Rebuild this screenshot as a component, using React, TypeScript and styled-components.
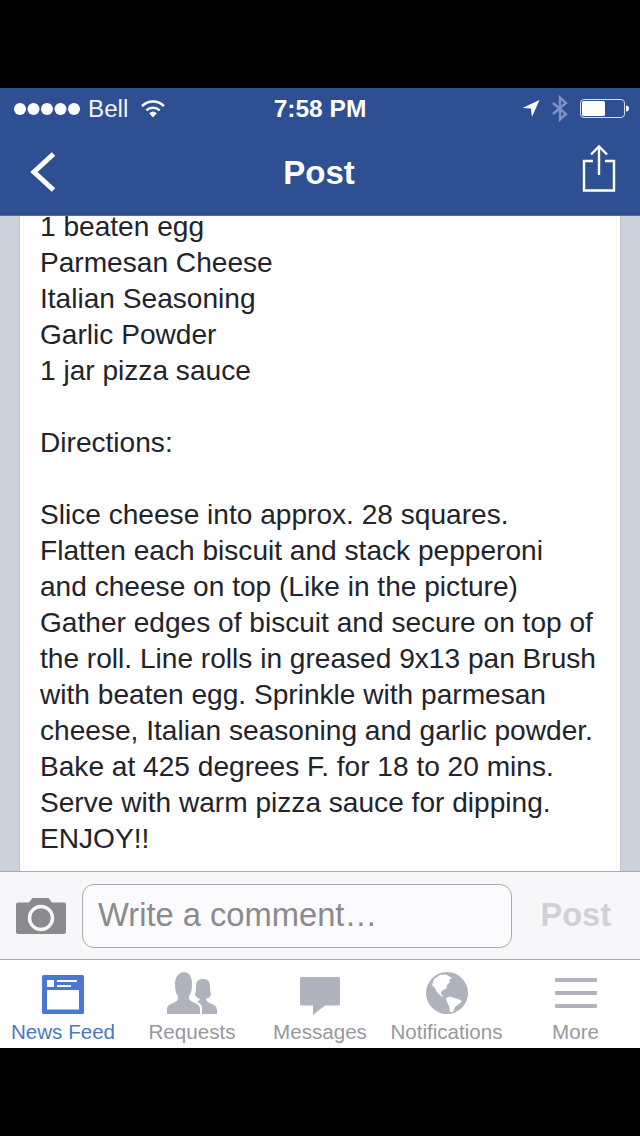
import styled, { createGlobalStyle } from 'styled-components';

const GlobalStyle = createGlobalStyle`
  html, body {
    margin: 0;
    padding: 0;
    background: #000;
    font-family: "Liberation Sans", Arial, sans-serif;
  }
`;

const Screen = styled.div`
  width: 640px;
  height: 1136px;
  padding: 88px 0;
  box-sizing: border-box;
  display: flex;
  flex-direction: column;
  background: #000;
`;

const Header = styled.header`
  height: 128px;
  flex: none;
  box-sizing: border-box;
  background: #2f4f93;
  border-bottom: 1px solid #5c6a88;
  color: #fff;
`;

const StatusBar = styled.div`
  height: 40px;
  padding: 1px 11px 0 11px;
  box-sizing: border-box;
  display: grid;
  grid-template-columns: 1fr auto 1fr;
  align-items: center;
  font-size: 24px;
`;

const StatusLeft = styled.div`
  display: flex;
  align-items: center;
  padding-left: 2px;
`;

const Carrier = styled.span`
  margin-left: 8px;
  margin-right: 12px;
  font-size: 24.200px;
  color: #f2f4f9;
`;

const Clock = styled.span`
  font-weight: 700;
  font-size: 24.500px;
`;

const StatusRight = styled.div`
  display: flex;
  align-items: center;
  justify-content: flex-end;
  gap: 12px;
`;

const NavBar = styled.div`
  height: 87px;
  padding: 0 24px 0 30px;
  display: flex;
  align-items: center;
  justify-content: space-between;
`;

const NavTitle = styled.h1`
  margin: 2px 0 0;
  font-size: 33px;
  font-weight: 700;
  color: #fff;
`;

const ShareButton = styled.div`
  display: flex;
  margin-bottom: 8px;
`;

const Content = styled.main`
  flex: 1;
  min-height: 0;
  overflow: hidden;
  background: #cdd1dc;
  padding: 0 19px;
`;

const Card = styled.article`
  height: 100%;
  box-sizing: border-box;
  background: #fff;
  border-left: 1px solid #c2c5cd;
  border-right: 1px solid #c2c5cd;
  padding-left: 20px;
  overflow: hidden;
`;

const PostText = styled.div`
  margin-top: -7px;
  font-size: 28.100px;
  line-height: 36px;
  color: #22232b;
  white-space: pre;
`;

const Composer = styled.div`
  height: 89px;
  flex: none;
  box-sizing: border-box;
  background: #f7f6f9;
  border-top: 1px solid #a9a9ae;
  border-bottom: 1px solid #a9a9ae;
  padding: 12px 29px 11px 16px;
  display: flex;
  align-items: center;
`;

const CommentBox = styled.div`
  width: 430px;
  height: 64px;
  margin-left: 16px;
  box-sizing: border-box;
  padding: 0 0 2px 15px;
  display: flex;
  align-items: center;
  background: #fbfafc;
  border: 1px solid #a9a8ad;
  border-radius: 12px;
  font-size: 32.700px;
  color: #8b8a8e;
`;

const PostButton = styled.span`
  margin: 0 0 2px auto;
  font-size: 32.500px;
  font-weight: 700;
  color: #d1d0d5;
`;

const TabBar = styled.nav`
  height: 88px;
  flex: none;
  background: #fff;
  display: grid;
  grid-template-columns: 126px 132px 124px 129px 129px;
`;

const Tab = styled.div<{ $active?: boolean }>`
  display: flex;
  flex-direction: column;
  align-items: center;
  padding-top: 10px;
  box-sizing: border-box;
  font-size: 20.600px;
  color: ${({ $active }) => ($active ? '#4a77c4' : '#97989f')};
`;

const TabIcon = styled.div`
  height: 44px;
  display: flex;
  align-items: flex-end;
  justify-content: center;
  margin-bottom: 6px;
`;

const TabLabel = styled.span`
  line-height: 24px;
  white-space: nowrap;
`;

const ICON_GREY = '#b0b3bd';

const Dots = () => (
  <svg width="67" height="14" viewBox="0 0 67 14">
    {[7, 20.5, 34, 47.5, 61].map((cx) => (
      <circle key={cx} cx={cx} cy="7" r="6" fill="#fff" />
    ))}
  </svg>
);

const Wifi = () => (
  <svg width="26" height="19" viewBox="0 0 26 20" fill="none" stroke="#fff" strokeWidth="2.6">
    <path d="M1.500 7.500a16 16 0 0 1 23 0" />
    <path d="M6 12a10 10 0 0 1 14 0" />
    <path d="M13 19.500l-4-4.500a6 6 0 0 1 8 0z" fill="#fff" stroke="none" />
  </svg>
);

const LocationArrow = () => (
  <svg width="18" height="19" viewBox="0 0 20 20">
    <path d="M19.500 0.500L0.500 9.500L10 10L11 19.500z" fill="#fff" />
  </svg>
);

const Bluetooth = () => (
  <svg width="16" height="27" viewBox="0 0 16 24" fill="none" stroke="#7e93c3" strokeWidth="2.400">
    <path d="M1 6.500L14 17.500L8 23V1L14 6.500L1 17.500" />
  </svg>
);

const Battery = () => (
  <svg width="49" height="20" viewBox="0 0 49 20">
    <rect x="0.500" y="0.500" width="44" height="18" rx="3.500" fill="none" stroke="#d6dcea" />
    <rect x="2" y="2" width="23" height="15" rx="1.500" fill="#fff" />
    <path d="M46 6.500c2 0 3 1.200 3 3s-1 3-3 3z" fill="#fff" />
  </svg>
);

const BackChevron = () => (
  <svg width="26" height="40" viewBox="0 0 26 40" fill="none" stroke="#fff" strokeWidth="5">
    <path d="M23.500 2L4 20L23.500 38" />
  </svg>
);

const ShareIcon = () => (
  <svg width="34" height="48" viewBox="0 0 34 48" fill="none" stroke="#fff" strokeWidth="2.400">
    <path d="M11 17H2V46.500H32V17H23" />
    <path d="M17 31V3" />
    <path d="M9 10.500L17 2.500L25 10.500" />
  </svg>
);

const CameraIcon = () => (
  <svg width="50" height="36" viewBox="0 0 50 36">
    <path
      d="M2 4.500h11l3.500-4.500h16l3.500 4.500h12a2 2 0 0 1 2 2V34a2 2 0 0 1-2 2H2a2 2 0 0 1-2-2V6.500a2 2 0 0 1 2-2z"
      fill="#8b8a8f"
    />
    <circle cx="25" cy="20" r="11.500" fill="none" stroke="#f7f6f9" strokeWidth="3.500" />
  </svg>
);

const NewsFeedIcon = () => (
  <svg width="42" height="39" viewBox="0 0 42 39">
    <rect width="42" height="39" rx="1.500" fill="#4a77d4" />
    <rect x="5" y="15" width="32" height="19.500" fill="#fff" />
    <rect x="5" y="5" width="7" height="7" fill="#fff" />
    <rect x="15" y="5" width="20" height="2" fill="#fff" />
    <rect x="15" y="10" width="14" height="2" fill="#fff" />
  </svg>
);

const RequestsIcon = () => (
  <svg width="50" height="42" viewBox="0 0 50 42">
    <path
      d="M0 42V37C0 34 2 33 4 32L10 29C11 28 11 26 11 24C9 22 8 18 8 12C8 5 11 1 17 0C23 1 25 5 25 12C25 18 24 22 22 24C22 26 22 28 24 29L30 32C32 33 33 35 33 37V42Z"
      fill={ICON_GREY}
    />
    <path
      d="M35 42V36C35 33 33 31 30 30C31 29 32 29 33 27C30 26 28 24 28 22C29 20 29 17 29 14C29 10 31 7 36 7C41 7 43 10 43 14C43 17 43 20 44 22C44 24 42 26 39 27C40 30 42 31 45 32C48 33 50 35 50 38V42Z"
      fill={ICON_GREY}
    />
  </svg>
);

const MessagesIcon = () => (
  <svg width="40" height="37" viewBox="0 0 40 37" overflow="visible">
    <path
      d="M1.500 0H38.500A1.500 1.500 0 0 1 40 1.500V27A1.500 1.500 0 0 1 38.500 28.500H25L13 38V28.500H1.500A1.500 1.500 0 0 1 0 27V1.500A1.500 1.500 0 0 1 1.500 0Z"
      fill={ICON_GREY}
    />
  </svg>
);

const GlobeIcon = () => (
  <svg width="42" height="42" viewBox="0 0 42 42">
    <circle cx="21" cy="21" r="21" fill={ICON_GREY} />
    <path
      d="M8 7L14 3L20 2.500L26 6L23 8L24 10L21 13L20 17L17 18L15 20L15 22L18 25L15 24L11 20L9 16L6 13Z"
      fill="#fff"
    />
    <path d="M20 26L24 24.500L28 26L32 27L36 29L33 32L29 35L27 40L24 40L23 34L21 30Z" fill="#fff" />
  </svg>
);

const MoreIcon = () => (
  <svg width="42" height="36" viewBox="0 0 42 36">
    <rect width="42" height="4" rx="1" fill={ICON_GREY} />
    <rect y="13" width="42" height="4" rx="1" fill={ICON_GREY} />
    <rect y="26" width="42" height="4" rx="1" fill={ICON_GREY} />
  </svg>
);

const postText = `1 beaten egg
Parmesan Cheese
Italian Seasoning
Garlic Powder
1 jar pizza sauce

Directions:

Slice cheese into approx. 28 squares.
Flatten each biscuit and stack pepperoni
and cheese on top (Like in the picture)
Gather edges of biscuit and secure on top of
the roll. Line rolls in greased 9x13 pan Brush
with beaten egg. Sprinkle with parmesan
cheese, Italian seasoning and garlic powder.
Bake at 425 degrees F. for 18 to 20 mins.
Serve with warm pizza sauce for dipping.
ENJOY!!`;

const tabs = [
  { label: 'News Feed', icon: <NewsFeedIcon />, active: true },
  { label: 'Requests', icon: <RequestsIcon /> },
  { label: 'Messages', icon: <MessagesIcon /> },
  { label: 'Notifications', icon: <GlobeIcon /> },
  { label: 'More', icon: <MoreIcon /> },
];

const App = () => (
  <>
    <GlobalStyle />
    <Screen>
      <Header>
        <StatusBar>
          <StatusLeft>
            <Dots />
            <Carrier>Bell</Carrier>
            <Wifi />
          </StatusLeft>
          <Clock>7:58 PM</Clock>
          <StatusRight>
            <LocationArrow />
            <Bluetooth />
            <Battery />
          </StatusRight>
        </StatusBar>
        <NavBar>
          <BackChevron />
          <NavTitle>Post</NavTitle>
          <ShareButton>
            <ShareIcon />
          </ShareButton>
        </NavBar>
      </Header>
      <Content>
        <Card>
          <PostText>{postText}</PostText>
        </Card>
      </Content>
      <Composer>
        <CameraIcon />
        <CommentBox>Write a comment…</CommentBox>
        <PostButton>Post</PostButton>
      </Composer>
      <TabBar>
        {tabs.map((tab) => (
          <Tab key={tab.label} $active={tab.active}>
            <TabIcon>{tab.icon}</TabIcon>
            <TabLabel>{tab.label}</TabLabel>
          </Tab>
        ))}
      </TabBar>
    </Screen>
  </>
);

export default App;
